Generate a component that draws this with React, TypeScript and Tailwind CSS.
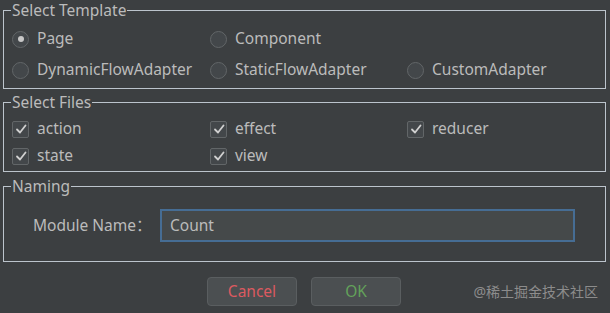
import type { ReactNode } from 'react'

const font = { fontFamily: '"Noto Sans", "Noto Sans CJK SC", sans-serif' }

function Group({ title, className, children }: { title: string; className?: string; children: ReactNode }) {
  return (
    <fieldset className={`ml-[3px] w-[603px] border border-[#bcc4cc] ${className ?? ''}`}>
      <legend className="ml-[7px] px-[1px] text-[15.5px] leading-[20px] text-[#bbbbbb]">{title}</legend>
      {children}
    </fieldset>
  )
}

function Radio({ label, checked }: { label: string; checked?: boolean }) {
  return (
    <div className="flex h-[20px] items-center gap-[8px]">
      <span className="flex h-[17px] w-[17px] items-center justify-center rounded-full border border-[#626668] bg-[#43474a]">
        {checked && <span className="h-[6px] w-[6px] rounded-full bg-[#c8c8c8]" />}
      </span>
      <span className="text-[15.5px] text-[#bbbbbb]">{label}</span>
    </div>
  )
}

function Check({ label }: { label: string }) {
  return (
    <div className="flex h-[20px] items-center gap-[8px]">
      <span className="flex h-[17px] w-[17px] items-center justify-center rounded-[2px] border border-[#626668] bg-[#43474a]">
        <svg width="12" height="12" viewBox="0 0 12 12">
          <polyline points="2,6.5 5,9.5 10.5,2.5" fill="none" stroke="#d0d0d0" strokeWidth="1.8" strokeLinecap="round" strokeLinejoin="round" />
        </svg>
      </span>
      <span className="text-[15.5px] text-[#bbbbbb]">{label}</span>
    </div>
  )
}

export default function App() {
  return (
    <div className="relative h-[313px] w-[610px] overflow-hidden bg-[#3c3f41]" style={font}>
      {/* Select Template */}
      <Group title="Select Template">
        <div className="grid grid-cols-[198px_197px_1fr] gap-y-[11px] pb-[8px] pl-[8px] pt-[9px]">
          <Radio label="Page" checked />
          <Radio label="Component" />
          <div />
          <Radio label="DynamicFlowAdapter" />
          <Radio label="StaticFlowAdapter" />
          <Radio label="CustomAdapter" />
        </div>
      </Group>

      {/* Select Files */}
      <Group title="Select Files" className="mt-[3px]">
        <div className="grid grid-cols-[198px_197px_1fr] gap-y-[7px] pb-[5px] pl-[8px] pt-[7px]">
          <Check label="action" />
          <Check label="effect" />
          <Check label="reducer" />
          <Check label="state" />
          <Check label="view" />
        </div>
      </Group>

      {/* Naming */}
      <Group title="Naming" className="mt-[4px]">
        <div className="flex items-center pb-[19px] pl-[29px] pt-[13px]">
          <span className="w-[127px] text-[15.5px] text-[#bbbbbb]">Module Name：</span>
          <div className="flex h-[33px] w-[415px] items-center border-2 border-[#466d94] bg-[#45494a] px-[8px] text-[15.5px] text-[#bbbbbb]">
            Count
          </div>
        </div>
      </Group>

      <div className="mt-[15px] flex justify-center gap-[14px] pr-[2px]">
        <button className="h-[29px] w-[90px] rounded-[4px] border border-[#5a5e60] bg-[#4b4f51] text-[15.5px] text-[#dc5a60]">
          Cancel
        </button>
        <button className="h-[29px] w-[90px] rounded-[4px] border border-[#5a5e60] bg-[#4b4f51] text-[15.5px] text-[#63a25a]">
          OK
        </button>
      </div>

      <div className="absolute bottom-[11px] right-[12px] text-[14px] text-[#8c8c8c]">@稀土掘金技术社区</div>
    </div>
  )
}
